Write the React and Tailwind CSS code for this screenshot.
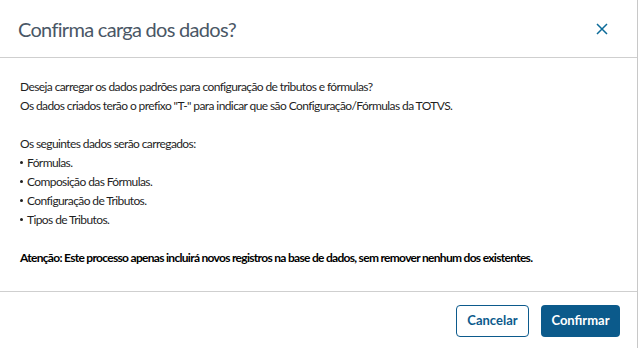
import React from "react";

export default function App() {
  const items = ["Fórmulas.", "Composição das Fórmulas.", "Configuração de Tributos.", "Tipos de Tributos."];

  return (
    <div className="w-[639px] h-[348px] bg-white overflow-hidden">
      <div className="w-[638px] h-[348px] border-r border-[#c8c8c8] flex flex-col">
        {/* header */}
        <div className="h-[58px] border-b border-[#cfcfcf] flex items-center justify-between pl-[18px] pr-[29px]">
          <h1 className="text-[20px] tracking-[-0.7px] text-[#4a5766] font-['Lato',sans-serif] pt-[1px]">Confirma carga dos dados?</h1>
          <button className="text-[#0c6b99]">
            <svg width="12" height="12" viewBox="0 0 12 12" fill="none" stroke="currentColor" strokeWidth="1.5">
              <path d="M1 1 L11 11 M11 1 L1 11" />
            </svg>
          </button>
        </div>

        {/* body */}
        <div className="flex-1 border-b border-[#cfcfcf] px-[20px] pt-[19px] text-[12px] leading-[19px] tracking-[-0.6px] text-[#1f1f1f] font-['Lato',sans-serif]">
          <p>Deseja carregar os dados padrões para configuração de tributos e fórmulas?</p>
          <p>Os dados criados terão o prefixo "T-" para indicar que são Configuração/Fórmulas da TOTVS.</p>
          <p className="mt-[19px]">Os seguintes dados serão carregados:</p>
          <ul>
            {items.map((it) => (
              <li key={it} className="flex items-center">
                <span className="w-[3px] h-[3px] rounded-full bg-[#1f1f1f] mr-[4px]" />
                {it}
              </li>
            ))}
          </ul>
          <p className="mt-[19px] font-bold tracking-[-0.7px] text-black">
            Atenção: Este processo apenas incluirá novos registros na base de dados, sem remover nenhum dos existentes.
          </p>
        </div>

        {/* footer */}
        <div className="h-[56px] flex items-center justify-end gap-[12px] pr-[17px] pt-[2px]">
          <button className="h-[32px] w-[73px] rounded-[4px] border border-[#0c5a8c] text-[#0c5a8c] text-[13px] font-bold font-['Lato',sans-serif]">
            Cancelar
          </button>
          <button className="h-[32px] w-[79px] rounded-[4px] bg-[#0b5a8b] text-white text-[13px] font-bold font-['Lato',sans-serif]">
            Confirmar
          </button>
        </div>
      </div>
    </div>
  );
}
